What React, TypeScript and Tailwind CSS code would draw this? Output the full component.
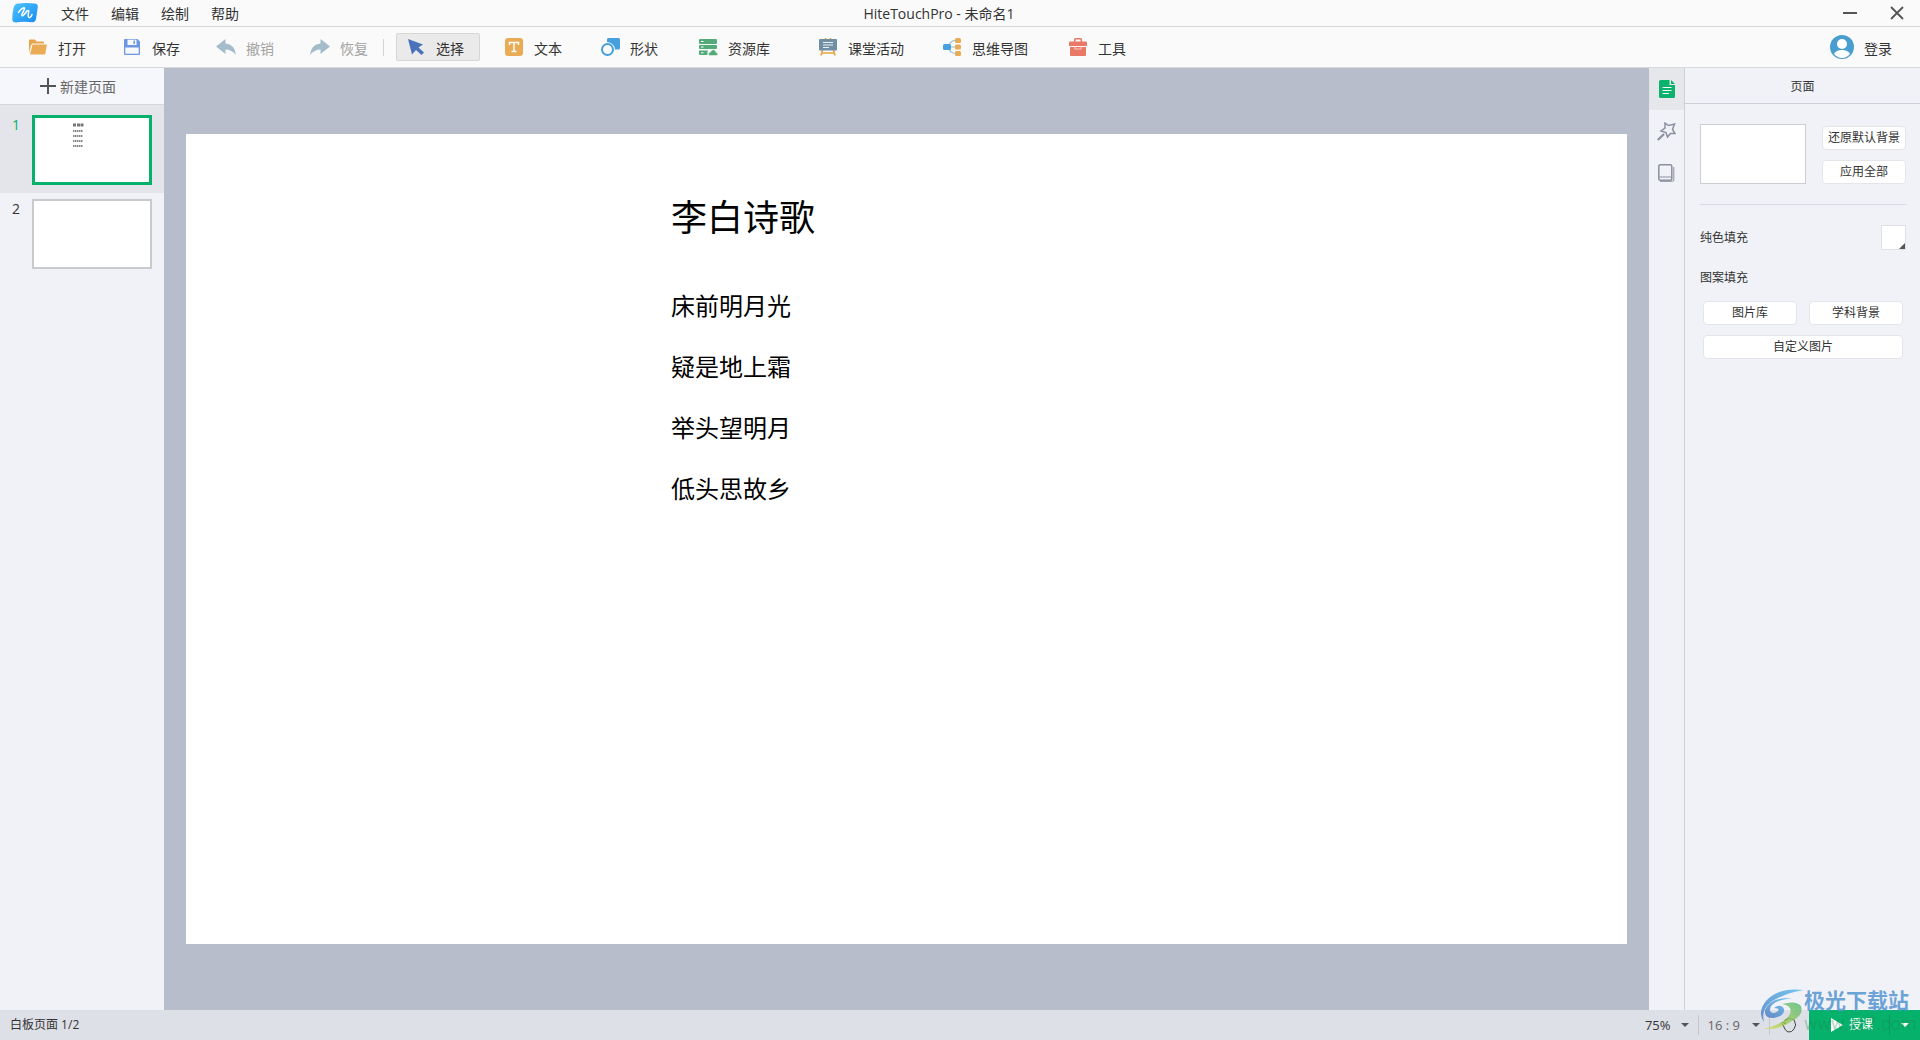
import type { ReactNode } from "react";

type Tool = { label: string; icon: ReactNode; gap?: string; active?: boolean; muted?: boolean };

const poem = ["床前明月光", "疑是地上霜", "举头望明月", "低头思故乡"];

const fileTools: Tool[] = [
  { label: "打开", icon: <OpenIcon /> },
  { label: "保存", icon: <SaveIcon /> },
  { label: "撤销", icon: <UndoIcon />, muted: true },
  { label: "恢复", icon: <RedoIcon />, muted: true },
];

const drawTools: Tool[] = [
  { label: "选择", icon: <CursorIcon />, gap: "ml-3", active: true },
  { label: "文本", icon: <TextIcon />, gap: "ml-3.5" },
  { label: "形状", icon: <ShapeIcon />, gap: "ml-3" },
  { label: "资源库", icon: <LibraryIcon />, gap: "ml-3.5" },
  { label: "课堂活动", icon: <BoardIcon />, gap: "ml-[22px]" },
  { label: "思维导图", icon: <MindIcon />, gap: "ml-3" },
  { label: "工具", icon: <ToolboxIcon />, gap: "ml-3.5" },
];

function OpenIcon() {
  return (
    <svg width="20" height="20" viewBox="0 0 20 20">
      <path d="M1 16V3.500Q1 2.500 2 2.500H7L8.500 4.500H15Q16 4.500 16 5.500V6.500H4.500L3 8Z" fill="#e8a44b" />
      <path d="M4.500 7.500H18.800L17.500 16Q17.200 17.500 16 17.500H2Z" fill="#eaab54" />
    </svg>
  );
}

function SaveIcon() {
  return (
    <svg width="20" height="20" viewBox="0 0 20 20">
      <path d="M3 2H15.500L18 4.500V17Q18 18 17 18H3Q2 18 2 17V3Q2 2 3 2Z" fill="#6f96e2" />
      <path d="M5.500 2.700H14.500V8H5.500Z" fill="#f7f9fd" />
      <path d="M11.500 3.500H13V7H11.500Z" fill="#6f96e2" />
      <path d="M3.300 10.500H16.700V16.700H3.300Z" fill="#f7f9fd" />
    </svg>
  );
}

function UndoIcon() {
  return (
    <svg width="20" height="20" viewBox="0 0 20 20">
      <path d="M0 9.500 9.500 2V6.500Q19 7.500 20 18Q15.500 12.500 9.500 12.500V17Z" fill="#a5bccb" />
    </svg>
  );
}

function RedoIcon() {
  return (
    <svg width="20" height="20" viewBox="0 0 20 20">
      <path d="M20 9.500 10.500 2V6.500Q1 7.500 0 18Q4.500 12.500 10.500 12.500V17Z" fill="#a5bccb" />
    </svg>
  );
}

function CursorIcon() {
  return (
    <svg width="20" height="20" viewBox="0 0 20 20">
      <path d="M2 2 17 7.500 12.500 10.500 18 15.500 15.500 18 10 13 6 17.500Z" fill="#4a72ba" />
    </svg>
  );
}

function TextIcon() {
  return (
    <svg width="20" height="20" viewBox="0 0 20 20">
      <rect x="1" y="1" width="18" height="18" rx="3" fill="#e9ab53" />
      <path d="M5.500 8V5.500H14.500V8M10 5.500V14.500M7.500 14.500H12.500" fill="none" stroke="#fff" strokeWidth="1.500" />
    </svg>
  );
}

function ShapeIcon() {
  return (
    <svg width="20" height="20" viewBox="0 0 20 20">
      <path d="M8.500 1H18.500Q20 1 20 2.500V11Q20 12.500 18.500 12.500H15Q14.500 6 7 5V2.500Q7 1 8.500 1Z" fill="#45a0dd" />
      <circle cx="7.500" cy="12.500" r="5.500" fill="none" stroke="#45a0dd" strokeWidth="2" />
    </svg>
  );
}

function LibraryIcon() {
  return (
    <svg width="20" height="20" viewBox="0 0 20 20">
      <g fill="#52ab78">
        <rect x="1" y="2" width="18" height="5" rx="1" />
        <rect x="1" y="8" width="18" height="4" rx="1" />
        <path d="M1 13.500H10Q9 15 9.500 18H2Q1 18 1 17Z" />
        <path d="M12.500 18.500Q10 18.500 10.500 16.500Q10.700 15.300 12.300 15.200Q13 12.500 15.500 12.700Q17.800 13 17.900 15.300Q20 15.700 19.800 17.300Q19.500 18.500 18 18.500Z" stroke="#fafafa" strokeWidth=".5" />
      </g>
      <path d="M3 4.500H5.500M3 10H5.500M3 15.800H5.500" stroke="#fff" />
    </svg>
  );
}

function BoardIcon() {
  return (
    <svg width="20" height="20" viewBox="0 0 20 20">
      <path d="M7.500 1V3M12.500 1V3M4.500 13 3 18.500M15.500 13 17 18.500M3.500 16H16.500" stroke="#e8a43c" strokeWidth="1.600" />
      <rect x="1" y="2" width="18" height="11.500" rx="1" fill="#718fa4" />
      <path d="M5 5.500H15M5 8H15M5 10.500H11" stroke="#e9f1f5" strokeWidth="1.100" />
    </svg>
  );
}

function MindIcon() {
  return (
    <svg width="20" height="20" viewBox="0 0 20 20">
      <path d="M7 9Q8 3.500 14 3.500M7 10H14M7 11Q8 16.500 14 16.500" fill="none" stroke="#8bbfe2" strokeWidth="1.200" />
      <rect x="1" y="7" width="8" height="6" rx="1.500" fill="#45a0dd" />
      <g fill="#e9ab53">
        <rect x="13" y="1" width="6" height="5" rx="1.500" />
        <rect x="13" y="7.500" width="6" height="5" rx="1.500" />
        <rect x="13" y="14" width="6" height="5" rx="1.500" />
      </g>
    </svg>
  );
}

function ToolboxIcon() {
  return (
    <svg width="20" height="20" viewBox="0 0 20 20">
      <path d="M6.700 5V2.500Q6.700 1.700 7.500 1.700H12.500Q13.300 1.700 13.300 2.500V5" fill="none" stroke="#e97866" strokeWidth="1.500" />
      <path d="M2 4.500H18Q19 4.500 19 5.500V9H1V5.500Q1 4.500 2 4.500Z" fill="#e97866" />
      <path d="M2 10H18V18Q18 19 17 19H3Q2 19 2 18Z" fill="#e97866" />
      <path d="M7 9.500V12H13V9.500" fill="none" stroke="#f7c5bd" strokeWidth="1.200" />
    </svg>
  );
}

function AppLogo() {
  return (
    <svg width="26" height="20" viewBox="0 0 26 20">
      <defs>
        <linearGradient id="logo" x1="0" y1="0" x2="1" y2="1">
          <stop offset="0" stopColor="#4fc4fb" />
          <stop offset="1" stopColor="#168cf3" />
        </linearGradient>
      </defs>
      <path d="M5 .8Q13 -.6 23 .5Q26 1 25.800 4L24 16Q23.500 19 20.500 19.300Q12 18 4 19.500Q.3 19.500 .3 16.500Q.3 9 1.800 4Q2.500 1.200 5 .8Z" fill="url(#logo)" />
      <path d="M6.500 9.500Q9.500 5 12 4.700Q13.500 5 10.500 10Q9 13.500 11 12.500Q13.500 10.500 15 8Q17.500 6.500 16.500 10Q15.500 14.500 17.500 14.800Q19 14.500 20 11.500" fill="none" stroke="#fff" strokeWidth="1.500" strokeLinecap="round" />
    </svg>
  );
}

function ToolButton({ tool }: { tool: Tool }) {
  return (
    <button
      className={`flex h-7 items-center gap-2.5 rounded-xs pl-[9px] pr-[15px] border ${tool.gap ?? ""}
        ${tool.active ? "border-[#d6d6d6] bg-[#eaeaea]" : "border-transparent"}
        ${tool.muted ? "text-[#a3a3a3]" : "text-[#333]"}`}
    >
      {tool.icon}
      <span className="pt-1">{tool.label}</span>
    </button>
  );
}

function PanelButton({ children, className = "" }: { children: ReactNode; className?: string }) {
  return (
    <button className={`h-6 rounded border border-[#e3e5eb] bg-white text-center leading-[22px] ${className}`}>
      {children}
    </button>
  );
}

function Caret({ className }: { className: string }) {
  return (
    <svg width="8" height="4" viewBox="0 0 8 4" className={className}>
      <path d="M0 0H8L4 4Z" fill="currentColor" />
    </svg>
  );
}

// small text copy of the page content inside the thumbnail
function Thumb({ lines, active }: { lines: boolean; active: boolean }) {
  return (
    <div className={`h-[70px] w-[120px] bg-white ${active ? "border-3 border-[#06b26b]" : "border-2 border-[#c9cacd]"}`}>
      {lines && (
        <svg width="114" height="64" viewBox="0 0 114 64">
          <path d="M38 7H49" stroke="#777" strokeWidth="3" strokeDasharray="3 1 3 .5" />
          <path d="M38 13H48M38 18H48M38 23H48M38 28H48" stroke="#888" strokeWidth="2" strokeDasharray="1.500 .5" />
        </svg>
      )}
    </div>
  );
}

function Watermark() {
  return (
    <div className="pointer-events-none absolute right-0 bottom-0 flex h-[52px] w-[162px]">
      <svg width="46" height="46" viewBox="0 0 46 46" className="shrink-0 opacity-75">
        <defs>
          <linearGradient id="swoosh" x1="1" y1="0" x2="0" y2="1">
            <stop offset="0" stopColor="#45b8ef" />
            <stop offset="1" stopColor="#3f6fbd" />
          </linearGradient>
          <linearGradient id="leaf" x1="1" y1="0" x2="0" y2="1">
            <stop offset="0" stopColor="#45b36b" />
            <stop offset="1" stopColor="#d9dd45" />
          </linearGradient>
        </defs>
        <path d="M46 2Q20 -1 8 13Q-1 24 6 34Q2 18 20 10Q32 4 46 2Z" fill="url(#swoosh)" />
        <path d="M34 10Q12 9 7 22Q6 31 16 30Q27 28 26 21Q23 15 16 20Q22 20 20 23Q15 27 12 23Q11 13 34 10Z" fill="url(#swoosh)" />
        <path d="M24 16Q38 12 43 18Q46 27 34 33Q22 42 6 41Q26 36 32 26Q35 18 24 16Z" fill="url(#leaf)" />
      </svg>
      <div className="leading-none">
        <div className="pt-0.5 text-[21px] font-bold text-[#5a98d2]/90">极光下载站</div>
        <div className="pt-1 font-[Roboto,sans-serif] text-[18px] text-[#18864f]/35">www.xz7.com</div>
      </div>
    </div>
  );
}

export default function App() {
  return (
    <div className="relative flex min-h-screen flex-col overflow-hidden bg-[#f0f2f8] font-['Open_Sans','Noto_Sans_CJK_SC',sans-serif] text-sm text-[#333]">
      {/* Title bar */}
      <header className="flex h-[27px] items-center border-b border-[#d9d9d9] bg-[#fafafa] pl-3">
        <AppLogo />
        <nav className="ml-[23px] flex gap-[22px] pt-0.5">
          {["文件", "编辑", "绘制", "帮助"].map((m) => (
            <button key={m}>{m}</button>
          ))}
        </nav>
        <h1 className="flex-1 pt-0.5 text-center">HiteTouchPro - 未命名1</h1>
        <div className="flex w-[281px] justify-end gap-[33px] pr-4 text-[#555]">
          <button aria-label="最小化">
            <svg width="14" height="14" viewBox="0 0 14 14"><path d="M0 7H14" stroke="currentColor" strokeWidth="2" /></svg>
          </button>
          <button aria-label="关闭">
            <svg width="14" height="14" viewBox="0 0 14 14"><path d="M1 1 13 13M13 1 1 13" stroke="currentColor" strokeWidth="1.800" /></svg>
          </button>
        </div>
      </header>

      {/* Toolbar */}
      <div className="flex h-[41px] items-center border-b border-[#d9dadc] bg-[#fafafa] pl-[18px] pr-7">
        <div className="flex gap-2.5">
          {fileTools.map((t) => <ToolButton key={t.label} tool={t} />)}
        </div>
        <div className="-ml-px h-[17px] w-px bg-[#d4d4d4]" />
        {drawTools.map((t) => <ToolButton key={t.label} tool={t} />)}
        <button className="ml-auto flex items-center gap-2.5">
          <svg width="24" height="24" viewBox="0 0 24 24">
            <circle cx="12" cy="12" r="12" fill="#4a9dcf" />
            <circle cx="12" cy="9" r="5" fill="#fff" />
            <path d="M4 19Q6 15 12 15Q18 15 20 19Q16.500 23 12 23Q7.500 23 4 19Z" fill="#fff" />
          </svg>
          <span className="pt-1">登录</span>
        </button>
      </div>

      <div className="flex flex-1">
        {/* Page list */}
        <aside className="w-[164px] shrink-0">
          <button className="flex h-[37px] w-full items-center gap-1 border-b border-[#d6d8dd] bg-[#f6f7fd] pl-10 text-[#666]">
            <svg width="16" height="16" viewBox="0 0 16 16"><path d="M0 8H16M8 0V16" stroke="#555" strokeWidth="2" /></svg>
            <span className="pt-0.5">新建页面</span>
          </button>
          <div className="flex bg-[#e4e5ea] pt-2.5 pb-2">
            <span className="w-8 pl-3 text-[#06b26b]">1</span>
            <Thumb lines active />
          </div>
          <div className="flex pt-1.5">
            <span className="w-8 pl-3">2</span>
            <Thumb lines={false} active={false} />
          </div>
        </aside>

        {/* Canvas */}
        <main className="flex flex-1 items-center bg-[#b7bdcb] px-[22px]">
          <article className="aspect-video w-full bg-white pt-14 pl-[485px] text-black">
            <h2 className="text-4xl leading-14">李白诗歌</h2>
            <div className="pt-[29px] text-2xl">
              {poem.map((line) => <p key={line} className="leading-[61px]">{line}</p>)}
            </div>
          </article>
        </main>

        {/* Panel tabs */}
        <div className="flex w-9 shrink-0 flex-col border-r border-[#cdd0d6]">
          <button aria-label="页面" className="flex h-[42px] items-center justify-center bg-[#e5e7eb]">
            <svg width="16" height="18" viewBox="0 0 16 18">
              <path d="M1.500 0H10.500V5H16V16.500Q16 18 14.500 18H1.500Q0 18 0 16.500V1.500Q0 0 1.500 0Z" fill="#0bb26c" />
              <path d="M12 0 16 4H12Z" fill="#0bb26c" />
              <path d="M3.500 7.500H12.500M3.500 10.500H12.500M3.500 13.500H10" stroke="#fff" strokeWidth="1.100" />
            </svg>
          </button>
          <button aria-label="动画" className="flex h-[42px] items-center justify-center">
            <svg width="19" height="19" viewBox="0 0 19 19" fill="none" stroke="#8c8f9e">
              <path d="M8 1 11.500 3.500 17.500 2 15.500 7.500 18 11.500 13.500 11.500 10.500 15 9 10.500 4 9 8 6Z" strokeWidth="1.500" />
              <path d="M.8 18 7 12" strokeWidth="2.200" />
            </svg>
          </button>
          <button aria-label="图层" className="flex h-[42px] items-center justify-center">
            <svg width="17" height="18" viewBox="0 0 17 18" fill="none" stroke="#8c8f9e">
              <rect x=".8" y=".8" width="13" height="15.500" rx="1.500" strokeWidth="1.500" />
              <path d="M1 13H13.500M15.800 3V16Q15.800 17.300 14.500 17.300H2" />
            </svg>
          </button>
        </div>

        {/* Properties */}
        <section className="w-[235px] shrink-0 text-xs">
          <h2 className="h-9 border-b border-[#cdd0d6] pt-px text-center leading-9">页面</h2>
          <div className="pr-3.5 pl-[15px]">
            <div className="flex items-end justify-between border-b border-[#d9dbe2] py-5">
              <div className="h-[60px] w-[106px] border border-[#ccced3] bg-white" />
              <div className="flex w-[84px] flex-col gap-2.5">
                <PanelButton>还原默认背景</PanelButton>
                <PanelButton>应用全部</PanelButton>
              </div>
            </div>
            <div className="flex items-center justify-between pt-5">
              <span>纯色填充</span>
              <button aria-label="纯色填充" className="flex h-[25px] w-[25px] items-end justify-end border border-[#dfe1e7] bg-white">
                <svg width="6" height="6" viewBox="0 0 6 6"><path d="M6 0V6H0Z" fill="#555" /></svg>
              </button>
            </div>
            <div className="pt-5 leading-4">图案填充</div>
            <div className="grid grid-cols-2 gap-x-3 gap-y-2.5 px-[3px] pt-[15px]">
              <PanelButton>图片库</PanelButton>
              <PanelButton>学科背景</PanelButton>
              <PanelButton className="col-span-2">自定义图片</PanelButton>
            </div>
          </div>
        </section>
      </div>

      {/* Status bar */}
      <footer className="flex h-[30px] items-center bg-[#dee0e7] pl-2.5 text-[13px]">
        <span className="flex-1 text-xs">白板页面 1/2</span>
        <button className="flex items-center gap-2.5">75% <Caret className="text-[#555]" /></button>
        <div className="mx-[9px] h-5 w-px bg-[#c6c8ce]" />
        <button className="flex items-center gap-3 text-[#666]">16 : 9 <Caret className="text-[#555]" /></button>
        <div className="mx-[9px] h-5 w-px bg-[#c6c8ce]" />
        <button aria-label="手势" className="mr-3 ml-0.5">
          <svg width="16" height="16" viewBox="0 0 16 16" fill="none" stroke="#444">
            <path d="M2 8Q0 6 2 5L4 7V3Q5 1.500 6 3Q7 0 8.500 2Q10 .5 11 2.500Q13 1.500 13.500 4Q16 8 13 12Q11 15.500 7 15Q4 14 2 8Z" />
          </svg>
        </button>
        <div className="flex h-full w-[111px] items-center bg-[#06b26b] text-xs text-white">
          <button className="flex h-full w-20 items-center gap-1.5 pl-[22px]">
            <svg width="12" height="14" viewBox="0 0 12 14"><path d="M0 0 12 7 0 14Z" fill="#fff" /></svg>
            授课
          </button>
          <div className="h-5 w-px bg-[#079a5e]" />
          <button aria-label="授课选项" className="flex h-full flex-1 items-center justify-center"><Caret className="text-white" /></button>
        </div>
      </footer>
      <Watermark />
    </div>
  );
}
